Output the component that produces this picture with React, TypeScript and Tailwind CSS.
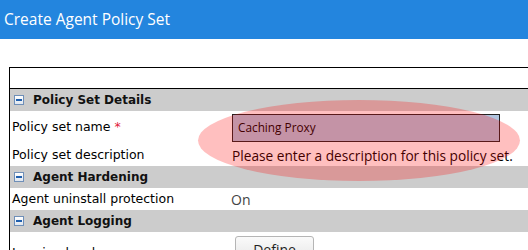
const MinusBox = () => (
  <span className="inline-flex items-center justify-center w-[10px] h-[10px] border border-[#6f8fb8] bg-gradient-to-b from-white to-[#dfe6ef] mr-[9px]">
    <span className="block w-[6px] h-[2px] bg-[#1f5fae]" />
  </span>
)

const Section = ({ title }: { title: string }) => (
  <div className="h-[22px] bg-[#cccccc] flex items-center pl-[4px] font-bold text-[12px] text-[#111] font-['DejaVu_Sans',sans-serif]">
    <MinusBox />
    {title}
  </div>
)

const Row = ({
  label,
  height,
  children,
}: {
  label: React.ReactNode
  height: string
  children?: React.ReactNode
}) => (
  <div className={`flex items-center bg-white ${height}`}>
    <div className="w-[220px] pl-[2px] text-[12.5px] text-black font-['DejaVu_Sans',sans-serif]">
      {label}
    </div>
    <div className="flex-1 min-w-0">{children}</div>
  </div>
)

export default function App() {
  return (
    <div className="w-[528px] h-[250px] overflow-hidden bg-white relative">
      <div className="h-[39px] bg-[#2385de] flex items-center pl-[4px] text-white text-[15.5px] font-['Open_Sans',sans-serif]">
        Create Agent Policy Set
      </div>
      <div className="ml-[9px] mt-[28px] w-[560px] border-l border-t border-black">
        <div className="h-[21px] border-b border-black" />
        <Section title="Policy Set Details" />
        <Row
          height="h-[33px]"
          label={
            <>
              Policy set name <span className="text-[#e0203a]">*</span>
            </>
          }
        >
          <div className="w-[268px] h-[28px] ml-[2px] border border-[#222] bg-[#b0c4de] flex items-center pl-[5px] text-[11.8px] text-black font-['Open_Sans',sans-serif]">
            Caching Proxy
          </div>
        </Row>
        <Row height="h-[22px]" label="Policy set description">
          <span className="pl-[2px] text-[13.7px] text-black font-['Open_Sans',sans-serif]">
            Please enter a description for this policy set.
          </span>
        </Row>
        <Section title="Agent Hardening" />
        <Row height="h-[22px]" label="Agent uninstall protection">
          <span className="pl-[1px] text-[14px] text-[#444] font-['Open_Sans',sans-serif]">
            On
          </span>
        </Row>
        <Section title="Agent Logging" />
        <Row height="h-[30px]" label={<span className="relative top-[6px]">Logging level</span>}>
          <button className="ml-[5px] mt-[4px] w-[79px] h-[26px] rounded-[3px] border border-[#b5b5b5] bg-gradient-to-b from-[#fafafa] to-[#e6e6e6] text-[14px] text-[#222] font-['Open_Sans',sans-serif]">
            Define
          </button>
        </Row>
      </div>
      {/* highlight annotation */}
      <div className="absolute left-[198px] top-[100px] w-[322px] h-[81px] rounded-[50%] bg-[rgba(255,0,0,0.25)] pointer-events-none" />
    </div>
  )
}
